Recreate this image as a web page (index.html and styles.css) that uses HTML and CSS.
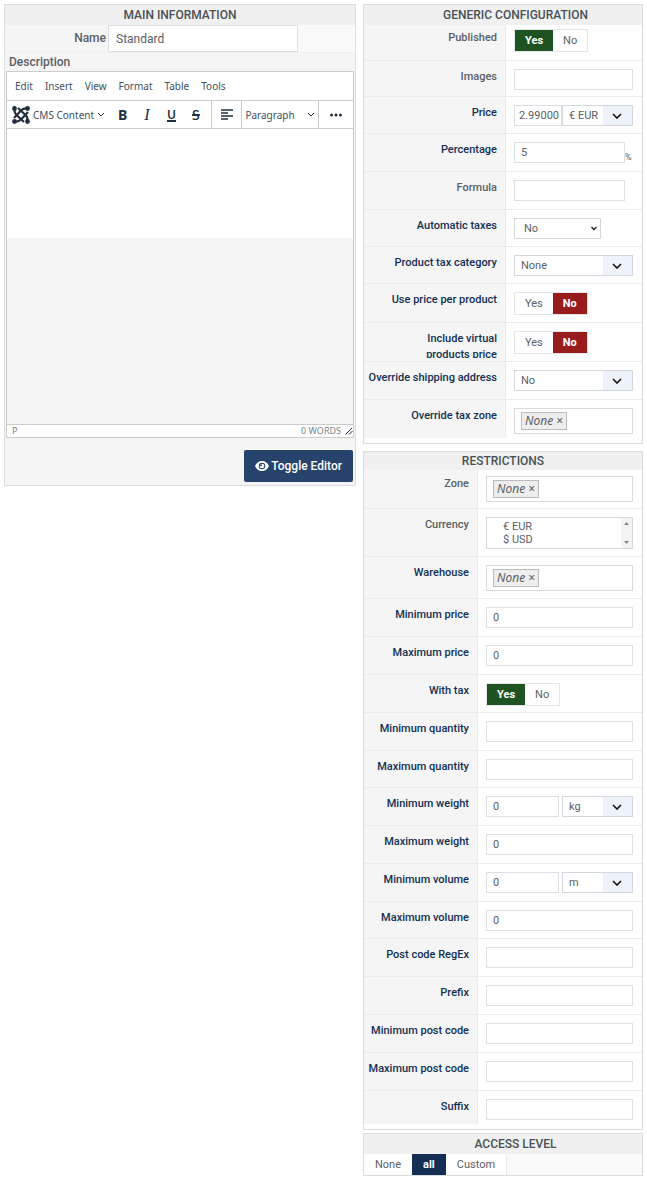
FILE: index.html
```
<!DOCTYPE html>
<html lang="en">
<head>
  <meta charset="UTF-8" />
  <title>Shipping method</title>
  <meta name="viewport" content="width=device-width, initial-scale=1.0"/>
  <link rel="stylesheet" href="styles.css">
</head>
<body>

<form class="page">
  <section class="panel main-info">
    <h2 class="panel-title">Main information</h2>
    <div class="name-row">
      <label for="name">Name</label>
      <div class="name-value"><input type="text" id="name" value="Standard"></div>
    </div>
    <h3 class="description-title">Description</h3>

    <div class="editor">
      <div class="menubar">
        <button type="button">Edit</button>
        <button type="button">Insert</button>
        <button type="button">View</button>
        <button type="button">Format</button>
        <button type="button">Table</button>
        <button type="button">Tools</button>
      </div>
      <div class="toolbar">
        <div class="tool-group tool-group-format">
          <button type="button" class="cms-button">
            <svg width="18" height="18" viewBox="0 0 18 18" fill="none" stroke="#222f3e" stroke-width="2.2">
              <g fill="#222f3e" stroke="none">
                <circle cx="2.5" cy="2.5" r="2.4"/><circle cx="15.5" cy="2.5" r="2.4"/>
                <circle cx="2.5" cy="15.5" r="2.4"/><circle cx="15.5" cy="15.5" r="2.4"/>
              </g>
              <path d="M2.500 2.500C2 6 3 7.500 4.500 9L12 16"/>
              <path d="M2.500 15.500C6 16 7.500 15 9 13.500L16 6"/>
              <path d="M15.500 15.500C16 12 15 10.500 13.500 9L6 2"/>
              <path d="M15.500 2.500C12 2 10.500 3 9 4.500L2 12"/>
            </svg>
            <span>CMS Content</span>
            <svg width="8" height="5" viewBox="0 0 8 5" fill="none" stroke="#222f3e"><path d="M1 1l3 3 3-3"/></svg>
          </button>
          <button type="button" class="tool bold" aria-label="Bold">B</button>
          <button type="button" class="tool italic" aria-label="Italic">I</button>
          <button type="button" class="tool underline" aria-label="Underline">U</button>
          <button type="button" class="tool strike" aria-label="Strikethrough">S</button>
        </div>
        <div class="tool-group tool-group-align">
          <button type="button" class="tool" aria-label="Align left">
            <svg width="12" height="11" viewBox="0 0 12 11" stroke="#222f3e" stroke-width="1.6"><path d="M0 1h12M0 4h7M0 7h12M0 10h7"/></svg>
          </button>
        </div>
        <div class="tool-group tool-group-block">
          <button type="button" class="block-button">
            <span>Paragraph</span>
            <svg width="8" height="5" viewBox="0 0 8 5" fill="none" stroke="#222f3e"><path d="M1 1l3 3 3-3"/></svg>
          </button>
        </div>
        <div class="tool-group tool-group-more">
          <button type="button" class="tool" aria-label="More">
            <svg width="12" height="4" viewBox="0 0 12 4" fill="#222f3e"><circle cx="1.600" cy="2" r="1.500"/><circle cx="6" cy="2" r="1.500"/><circle cx="10.400" cy="2" r="1.500"/></svg>
          </button>
        </div>
      </div>
      <div class="edit-area" contenteditable="true" role="textbox" aria-label="Description"></div>
      <div class="edit-space"></div>
      <div class="statusbar">
        <span>P</span>
        <span class="word-count">0 WORDS</span>
        <svg width="8" height="8" viewBox="0 0 8 8" stroke="#222f3e" fill="none"><path d="M0.500 7.500l6.500-6.500M4 7.500l3.500-3.500"/></svg>
      </div>
    </div>

    <div class="editor-actions">
      <button type="button" class="toggle-editor">
        <svg width="14" height="10" viewBox="0 0 14 10"><path fill="#fff" d="M7 0C3.800 0 1.300 2 0 5c1.300 3 3.800 5 7 5s5.700-2 7-5c-1.300-3-3.800-5-7-5z"/><circle cx="7" cy="5" r="3.300" fill="#25436b"/><circle cx="7" cy="5" r="2.300" fill="#fff"/><circle cx="6" cy="4.200" r="1" fill="#25436b"/></svg>
        Toggle Editor
      </button>
    </div>
  </section>

  <div class="side">
    <section class="panel generic">
      <h2 class="panel-title">Generic configuration</h2>
      <div class="row first short">
        <span class="key plain" id="published">Published</span>
        <div class="value">
          <div class="switch" role="radiogroup" aria-labelledby="published">
            <label class="yes"><input type="radio" name="published" checked>Yes</label>
            <label class="no"><input type="radio" name="published">No</label>
          </div>
        </div>
      </div>
      <div class="row short">
        <label class="key plain" for="images">Images</label>
        <div class="value"><input type="text" id="images"></div>
      </div>
      <div class="row medium">
        <label class="key" for="price">Price</label>
        <div class="value">
          <input type="text" id="price" class="price" value="2.99000">
          <select class="unit" aria-label="Price currency"><option>€ EUR</option></select>
        </div>
      </div>
      <div class="row">
        <label class="key" for="percentage">Percentage</label>
        <div class="value"><input type="text" id="percentage" value="5"><span class="percent">%</span></div>
      </div>
      <div class="row">
        <label class="key plain" for="formula">Formula</label>
        <div class="value"><input type="text" id="formula"><span class="percent"></span></div>
      </div>
      <div class="row medium">
        <label class="key" for="taxes">Automatic taxes</label>
        <div class="value"><select id="taxes" class="small-select"><option>No</option></select></div>
      </div>
      <div class="row medium">
        <label class="key" for="category">Product tax category</label>
        <div class="value"><select id="category"><option>None</option></select></div>
      </div>
      <div class="row tall">
        <span class="key" id="per-product">Use price per product</span>
        <div class="value">
          <div class="switch" role="radiogroup" aria-labelledby="per-product">
            <label class="yes"><input type="radio" name="per-product">Yes</label>
            <label class="no"><input type="radio" name="per-product" checked>No</label>
          </div>
        </div>
      </div>
      <div class="row tall">
        <span class="key" id="virtual"><span class="key-clip">Include virtual products price</span></span>
        <div class="value">
          <div class="switch" role="radiogroup" aria-labelledby="virtual">
            <label class="yes"><input type="radio" name="virtual">Yes</label>
            <label class="no"><input type="radio" name="virtual" checked>No</label>
          </div>
        </div>
      </div>
      <div class="row">
        <label class="key" for="address">Override shipping address</label>
        <div class="value"><select id="address"><option>No</option></select></div>
      </div>
      <div class="row">
        <span class="key">Override tax zone</span>
        <div class="value"><div class="tags"><button type="button" class="tag"><em>None</em> ×</button></div></div>
      </div>
    </section>

    <section class="panel restrictions">
      <h2 class="panel-title">Restrictions</h2>
      <div class="row first tall">
        <span class="key plain">Zone</span>
        <div class="value"><div class="tags"><button type="button" class="tag"><em>None</em> ×</button></div></div>
      </div>
      <div class="row list-row">
        <label class="key plain" for="currency">Currency</label>
        <div class="value">
          <div class="list">
            <select id="currency" multiple size="2"><option>€ EUR</option><option>$ USD</option></select>
            <span class="scroller">
              <svg width="5" height="3" viewBox="0 0 5 3" fill="#888"><path d="M0 3l2.500-3L5 3z"/></svg>
              <svg width="5" height="3" viewBox="0 0 5 3" fill="#888"><path d="M0 0l2.500 3L5 0z"/></svg>
            </span>
          </div>
        </div>
      </div>
      <div class="row tag-row">
        <span class="key">Warehouse</span>
        <div class="value"><div class="tags"><button type="button" class="tag"><em>None</em> ×</button></div></div>
      </div>
      <div class="row">
        <label class="key" for="min-price">Minimum price</label>
        <div class="value"><input type="text" id="min-price" value="0"></div>
      </div>
      <div class="row">
        <label class="key" for="max-price">Maximum price</label>
        <div class="value"><input type="text" id="max-price" value="0"></div>
      </div>
      <div class="row">
        <span class="key" id="with-tax">With tax</span>
        <div class="value">
          <div class="switch" role="radiogroup" aria-labelledby="with-tax">
            <label class="yes"><input type="radio" name="with-tax" checked>Yes</label>
            <label class="no"><input type="radio" name="with-tax">No</label>
          </div>
        </div>
      </div>
      <div class="row">
        <label class="key" for="min-quantity">Minimum quantity</label>
        <div class="value"><input type="text" id="min-quantity"></div>
      </div>
      <div class="row medium">
        <label class="key" for="max-quantity">Maximum quantity</label>
        <div class="value"><input type="text" id="max-quantity"></div>
      </div>
      <div class="row">
        <label class="key" for="min-weight">Minimum weight</label>
        <div class="value spaced">
          <input type="text" id="min-weight" value="0">
          <select class="unit" aria-label="Weight unit"><option>kg</option></select>
        </div>
      </div>
      <div class="row">
        <label class="key" for="max-weight">Maximum weight</label>
        <div class="value"><input type="text" id="max-weight" value="0"></div>
      </div>
      <div class="row">
        <label class="key" for="min-volume">Minimum volume</label>
        <div class="value spaced">
          <input type="text" id="min-volume" value="0">
          <select class="unit" aria-label="Volume unit"><option>m</option></select>
        </div>
      </div>
      <div class="row medium">
        <label class="key" for="max-volume">Maximum volume</label>
        <div class="value"><input type="text" id="max-volume" value="0"></div>
      </div>
      <div class="row">
        <label class="key" for="regex">Post code RegEx</label>
        <div class="value"><input type="text" id="regex"></div>
      </div>
      <div class="row">
        <label class="key" for="prefix">Prefix</label>
        <div class="value"><input type="text" id="prefix"></div>
      </div>
      <div class="row">
        <label class="key" for="min-post">Minimum post code</label>
        <div class="value"><input type="text" id="min-post"></div>
      </div>
      <div class="row">
        <label class="key" for="max-post">Maximum post code</label>
        <div class="value"><input type="text" id="max-post"></div>
      </div>
      <div class="row last">
        <label class="key" for="suffix">Suffix</label>
        <div class="value"><input type="text" id="suffix"></div>
      </div>
    </section>

    <section class="panel access">
      <h2 class="panel-title" id="access">Access level</h2>
      <div class="access-options" role="radiogroup" aria-labelledby="access">
        <label><input type="radio" name="access">None</label>
        <label><input type="radio" name="access" checked>all</label>
        <label><input type="radio" name="access">Custom</label>
      </div>
    </section>
  </div>
</form>

</body>
</html>
```
FILE: styles.css
```
* {
  box-sizing: border-box;
}

body {
  margin: 0;
  background: #fff;
  font-family: Roboto, "Liberation Sans", sans-serif;
  font-size: 11px;
  color: #5b6066;
}

button,
input,
select {
  font: inherit;
  color: inherit;
  margin: 0;
}

button {
  padding: 0;
  border: none;
  background: none;
  cursor: pointer;
}

.page {
  display: grid;
  grid-template-columns: 352fr 280fr;
  align-items: start;
  gap: 7px;
  padding: 4px;
}

.panel {
  border: 1px solid #dcdcdc;
  background: #fff;
}

.panel-title {
  margin: 0;
  background: #f0f0f0;
  color: #495057;
  font-size: 12px;
  font-weight: 500;
  line-height: 20px;
  text-align: center;
  text-transform: uppercase;
}

.generic .panel-title,
.access .panel-title {
  padding-left: 25px;
}

/* main information */
.main-info {
  background: #f5f5f5;
}

.name-row {
  display: grid;
  grid-template-columns: 103px 1fr;
  border-bottom: 1px solid #f0f0f0;
}

.name-row label {
  padding-right: 2px;
  font-size: 12px;
  font-weight: 500;
  line-height: 27px;
  text-align: right;
}

.name-value {
  background: #fafafa;
}

.name-value input {
  display: block;
  width: 77%;
  height: 27px;
  padding: 0 7px;
  border: 1px solid #dbe1e8;
  background: #fff;
  font-size: 12px;
}

.description-title {
  margin: 0;
  padding-left: 4px;
  font-size: 12px;
  font-weight: 500;
  line-height: 18px;
}

.editor {
  margin: 0 1px;
  border: 1px solid #ccc;
  font-family: "Noto Sans", sans-serif;
  color: #222f3e;
}

.menubar {
  display: flex;
  gap: 12px;
  height: 28px;
  padding: 0 8px;
  background: #fff;
  color: #444f5b;
  font-size: 10px;
}

.toolbar {
  display: flex;
  height: 29px;
  border-top: 1px solid #ccc;
  border-bottom: 1px solid #ccc;
  background: #fff;
  font-size: 10px;
}

.tool-group {
  display: flex;
  align-items: center;
  justify-content: center;
  border-right: 1px solid #ccc;
}

.tool-group-format {
  flex: 1;
  justify-content: space-between;
  padding: 0 8px 0 5px;
}

.tool-group-align {
  width: 30px;
}

.tool-group-block {
  width: 77px;
}

.tool-group-more {
  width: 34px;
  border-right: none;
}

.cms-button,
.block-button {
  display: flex;
  align-items: center;
  gap: 3px;
  color: #444f5b;
}

.block-button {
  gap: 12px;
}

.tool {
  min-width: 14px;
  font-size: 14px;
}

.tool svg {
  display: block;
  margin: 0 auto;
}

.bold {
  font-weight: bold;
}

.italic {
  font-family: "Liberation Serif", serif;
  font-size: 16px;
  font-style: italic;
}

.underline {
  font-size: 12px;
  font-weight: 600;
  text-decoration: underline 2px;
}

.strike {
  font-weight: 500;
  text-decoration: line-through 2px;
}

.edit-area {
  height: 109px;
  background: #fff;
  outline: none;
}

.edit-space {
  height: 186px;
}

.statusbar {
  display: flex;
  align-items: center;
  height: 13px;
  padding-left: 5px;
  border-top: 1px solid #ccc;
  background: #fff;
  color: #7b838c;
  font-size: 9px;
  line-height: 12px;
}

.word-count {
  margin-left: auto;
  margin-right: 4px;
}

.editor-actions {
  display: flex;
  justify-content: flex-end;
  padding: 12px 2px 3px;
}

.toggle-editor {
  display: flex;
  align-items: center;
  gap: 2px;
  height: 32px;
  padding: 0 11px;
  border-radius: 2px;
  background: #25436b;
  color: #fff;
  font-size: 12px;
  font-weight: 500;
}

/* right column */
.generic,
.restrictions {
  padding-bottom: 5px;
}

.restrictions {
  margin-top: 7px;
}

.restrictions .panel-title {
  line-height: 18px;
}

.access {
  margin-top: 3px;
}

.row {
  display: grid;
  grid-template-columns: 142px 1fr;
  min-height: 38px;
  border-bottom: 1px solid #ebebeb;
}

.restrictions .row {
  grid-template-columns: 114px 1fr;
}

.panel .row:last-child {
  border-bottom: none;
}

.short {
  min-height: 36px;
}

.medium {
  min-height: 37px;
}

.tall {
  min-height: 39px;
}

.list-row {
  min-height: 48px;
}

.tag-row {
  min-height: 42px;
}

.restrictions .last {
  min-height: 33px;
}

.key {
  padding: 8px 8px 0 0;
  border-right: 1px solid #ebebeb;
  background: #f5f5f5;
  color: #132f53;
  font-weight: 500;
  line-height: 16px;
  text-align: right;
}

.plain {
  color: #5b6066;
}

.key-clip {
  display: block;
  height: 27px;
  padding-left: 40px;
  overflow: hidden;
}

.value {
  display: flex;
  align-items: flex-start;
  padding: 8px 9px 0 8px;
}

.first .key {
  padding-top: 5px;
}

.first .value {
  padding-top: 4px;
}

.restrictions .first .key,
.restrictions .first .value {
  padding-top: 6px;
}

.value input[type="text"] {
  flex: 1;
  width: 100%;
  min-width: 0;
  height: 21px;
  padding: 0 6px;
  border: 1px solid #dbe0e6;
  background: #fff;
}

.value > select {
  flex: 1;
  min-width: 0;
  height: 21px;
  padding: 0 6px;
  border: 1px solid #d3d8de;
  border-radius: 0;
  appearance: none;
  background: url("data:image/svg+xml,%3Csvg xmlns='http://www.w3.org/2000/svg' width='10' height='6' viewBox='0 0 10 6' fill='none' stroke='%23111' stroke-width='1.6'%3E%3Cpath d='M1 1l4 4 4-4'/%3E%3C/svg%3E") no-repeat right 10px center,
    linear-gradient(#edf2fb, #edf2fb) no-repeat right / 29px 100%,
    #fff;
}

.value > .unit {
  flex: 0 0 71px;
}

.value > .small-select {
  flex: 0 0 87px;
  padding: 0 9px;
  background: url("data:image/svg+xml,%3Csvg xmlns='http://www.w3.org/2000/svg' width='6' height='5' viewBox='0 0 6 5' fill='none' stroke='%23222' stroke-width='1.4'%3E%3Cpath d='M.5 1L3 3.500 5.500 1'/%3E%3C/svg%3E") no-repeat right 3px center #fff;
}

.value input.price {
  padding: 0 0 0 4px;
}

.spaced {
  gap: 3px;
}

.percent {
  align-self: flex-start;
  width: 8px;
  padding-top: 9px;
  font-size: 9px;
  line-height: 12px;
}

.switch {
  display: flex;
  height: 23px;
  border: 1px solid #e4e7ea;
  line-height: 21px;
}

.switch label {
  padding: 0 10px;
}

.switch input,
.access-options input {
  position: absolute;
  opacity: 0;
}

.switch label:has(:checked),
.access-options label:has(:checked) {
  color: #fff;
  font-weight: 700;
}

.yes:has(:checked) {
  background: #1f5422;
}

.no:has(:checked) {
  background: #981b1e;
}

.tags {
  flex: 1;
  height: 26px;
  padding: 3px 6px;
  border: 1px solid #d8dbdf;
}

.tag {
  display: block;
  height: 18px;
  padding: 0 3px;
  border: 1px solid #bbb;
  background: #eee;
  font-family: "Noto Sans", sans-serif;
  font-size: 12px;
  line-height: 16px;
}

.list {
  display: flex;
  flex: 1;
  height: 32px;
  border: 1px solid #d3d8de;
}

.list select {
  flex: 1;
  min-width: 0;
  height: 30px;
  padding: 2px 14px;
  border: none;
  background: #fff;
  overflow: hidden;
}

.list option {
  min-height: 13px;
  padding: 0 2px;
  line-height: 13px;
}

.scroller {
  display: flex;
  flex-direction: column;
  align-items: center;
  justify-content: space-between;
  width: 11px;
  padding: 4px 0;
  background: #f3f3f3;
}

.access-options {
  display: flex;
  background: #fafafa;
  line-height: 21px;
}

.access-options label {
  padding: 0 11px;
  background: #fff;
}

.access-options label:last-child {
  border-right: 1px solid #ebebeb;
}

.access-options label:has(:checked) {
  background: #132f53;
}
```
